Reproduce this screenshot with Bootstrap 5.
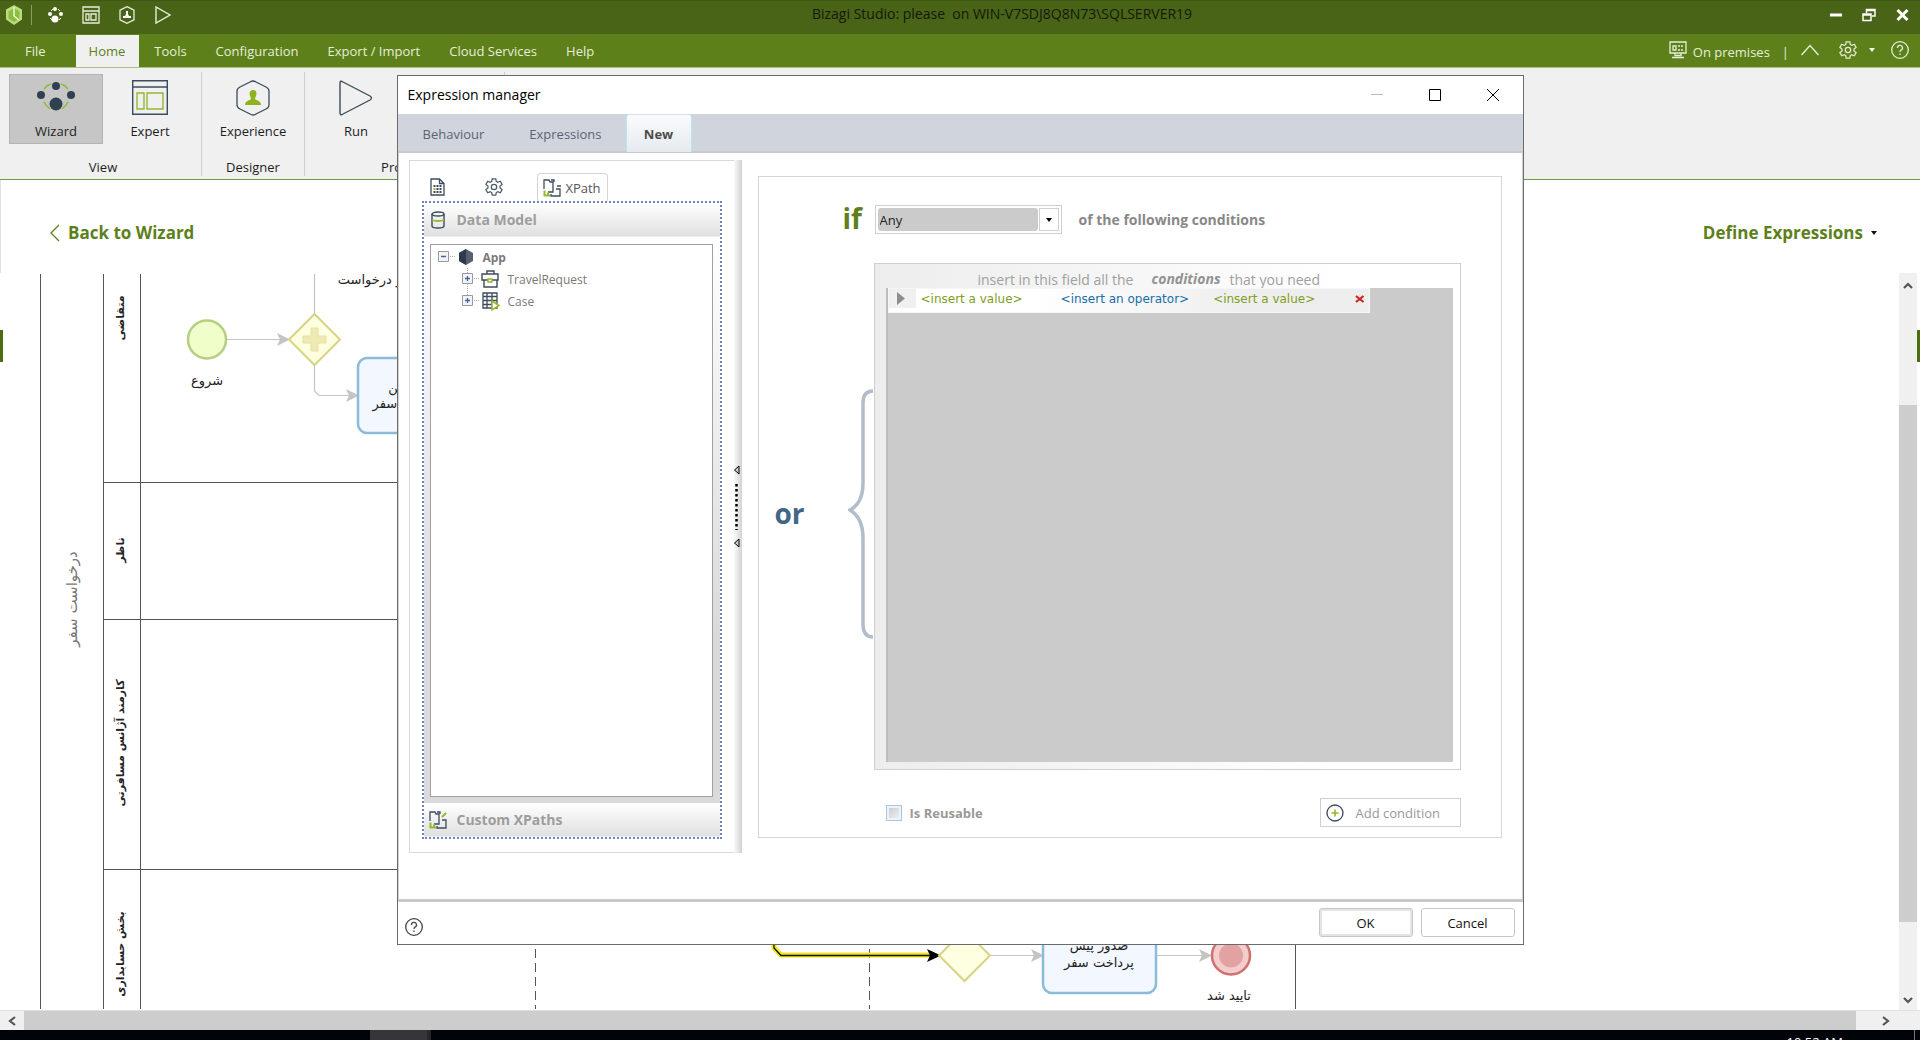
<!DOCTYPE html>
<html lang="en">
<head>
<meta charset="utf-8">
<meta name="viewport" content="width=device-width, initial-scale=1">
<title>Bizagi Studio</title>
<link href="https://cdn.jsdelivr.net/npm/bootstrap@5.3.0/dist/css/bootstrap.min.css" rel="stylesheet">
<style>
  :root { --green: #5d801b; }
  body { font-family: "Open Sans", "DejaVu Sans", sans-serif; font-size: 13px; line-height: 16px; color: #1e1e1e; background: #fff; }
  button { font: inherit; color: inherit; background: none; border: 0; padding: 0; }
  svg { display: block; flex: none; }
  a { text-decoration: none; }

  .titlebar { height: 34px; background: #496317; border-top: 1px solid #3f5714; color: #14190c; padding: 0 6px 6px 5px; }
  .titlebar .side { flex: 1 1 0; }
  .apptitle { font-size: 14px; white-space: pre; padding: 0 0 2px 90px; }
  .winbtns { gap: 20px; padding-right: 5px; }
  .title-sep { width: 1px; height: 20px; background: #8a9c68; }
  .menubar { height: 34px; background: var(--green); border-bottom: 1px solid #a9bf83; color: #e6eed6; gap: 1px; }
  .menubar a { color: #e6eed6; padding: 0 14px; height: 32px; display: flex; align-items: center; }
  .menubar a.current { background: #f0f0f0; color: var(--green); padding-left: 13px; }
  .menubar a.first { padding-left: 25px; padding-right: 29px; }
  .menutools { gap: 16px; padding-right: 11px; padding-bottom: 2px; }
  .menutools .divider { margin: 0 -4px; padding-top: 4px; }
  .menugear { gap: 12px; padding-left: 4px; }

  .ribbon { height: 112px; background: #f0f0f0; border-bottom: 1px solid #6f9a3a; padding-top: 4px; }
  .rgroup { height: 104px; border-right: 1px solid #cfcfcf; padding: 2px 4px 1px; }
  .rgroup.view { padding-left: 9px; }
  .rgroup.process { width: 200px; }
  .rbtn { width: 94px; height: 70px; border: 1px solid transparent; padding: 5px 0 4px; display: flex; flex-direction: column; align-items: center; justify-content: space-between; }
  .rbtn.pressed { background: #c6c6c6; border-color: #b4b4b4; }

  .workhead { height: 93px; padding: 13px 43px 0 49px; border-left: 1px solid #e0e0e0; }
  .workhead a, .workhead button { color: var(--green); font-size: 17px; font-weight: 700; gap: 8px; }
  .edge { width: 3px; background: linear-gradient(#4d6d14, #4d6d14) 0 57px / 100% 32px no-repeat; }
  .shrinkable { min-height: 0; }
  .vbar { width: 18px; background: #f0f0f0; }
  .vbar .above { flex: 112 0 0; } .vbar .thumb { flex: 517 0 0; } .vbar .below { flex: 68 0 0; }
  .hbar { height: 20px; background: #f0f0f0; border-top: 1px solid #e0e0e0; }
  .thumb { background: #cdcdcd; }
  .vbar .btnbox { height: 20px; }
  .hbar .first { width: 24px; }
  .hbar .last { width: 64px; padding-left: 26px; }
  .taskbar { height: 10px; background: #000308; color: #fff; overflow: hidden; }
  .taskitem { width: 61px; height: 10px; margin-left: 370px; background: #36363a; border-right: 4px solid #28282b; }
  .clock { padding-top: 4px; }
  .showdesk { width: 6px; height: 10px; margin-left: 71px; border-left: 1px solid #777; }

  .overlay { position: absolute; left: 0; right: 0; top: 75px; display: flex; justify-content: center; }
  .dlg { width: 1127px; border: 1px solid #6b6b6b; background: #fff; }
  .dlg-title { height: 38px; padding: 0 24px 0 10px; font-size: 14px; color: #000; }
  .dlg-title .wbtns { gap: 46px; }
  .dlg-tabs { height: 39px; background: #cfd4dd; border-bottom: 2px solid #c8cacd; }
  .dlg-tabs button { height: 38px; color: #5c6470; padding: 1px 24px 0 25px; }
  .dlg-tabs button + button { padding-left: 21px; }
  .dlg-tabs button.current { background: linear-gradient(#fafbfc, #e6eaef); border: 1px solid #b5e6f2; border-top-color: #d8dde4; border-bottom: 0; border-radius: 3px 3px 0 0; width: 66px; padding: 0; font-weight: 700; color: #4c4c4c; }
  .dlg-body { padding: 7px 20px 46px 10px; border: 1px solid #d2d2d2; border-top: 0; border-bottom: 3px solid #c9c9c9; }
  .leftpane { width: 325px; border: 1px solid #d9d9d9; border-right: 0; padding: 12px 12px 13px; height: 693px; }
  .splitter { width: 8px; background: linear-gradient(90deg, #fafafa, #e4e4e4 55%, #d2d2d2); }
  .tooltabs { height: 28px; padding-left: 8px; }
  .tooltabs .gear { margin: 0 34px 0 40px; }
  .xtab { width: 71px; height: 28px; border: 1px solid #d4d4d4; border-bottom: 0; border-radius: 4px 4px 0 0; gap: 4px; color: #555; }
  .accordionbox { border: 2px dotted #6d84bd; flex: 1 1 auto; min-height: 0; }
  .acchead { height: 34px; padding-left: 7px; color: #9d9d9d; font-weight: 700; font-size: 14px; background: linear-gradient(#fff, #e0e0e0); border-bottom: 1px solid #eee; }
  .acchead .iconcell { width: 26px; }
  .acchead.lower { padding-left: 5px; } .acchead.lower .iconcell { width: 28px; }
  .accbody { padding: 7px 7px 6px 6px; background: linear-gradient(#fff, #dadada 70%); }
  .treebox { background: #fff; border: 1px solid #9ea0a8; padding: 1px 0 0 7px; color: #7a7a7a; font-size: 12px; }
  .treerow { height: 22px; }
  .treerow span { padding-top: 1px; }
  .rightpane { margin: 16px 0 15px 16px; border: 1px solid #d6d6d6; flex: 1 1 0; padding: 0 40px 10px 0; }
  .leadword { font-weight: 700; font-size: 28px; }
  .ifword { color: var(--green); line-height: 27px; width: 32px; }
  .orword { color: #436687; padding: 0 0 7px 16px; line-height: 32px; }
  .brace { margin-bottom: 5px; }
  .combo { width: 187px; height: 29px; border: 1px solid #cfcfcf; padding: 2px; }
  .combo select { appearance: none; border: 0; border-radius: 3px; background: #cbcbcb; color: #222; padding: 0 2px; width: 160px; height: 23px; font: inherit; }
  .combo .arrowbox { width: 20px; height: 23px; border: 1px solid #d0d0d0; }
  .followtext { color: #888; font-size: 14px; font-weight: 700; line-height: 29px; margin-left: 17px; }
  .ifrow { height: 86px; padding: 28px 0 0 84px; }
  .condbox { border: 1px solid #cfcfcf; background: linear-gradient(90deg, #ededed, #f7f7f7 45%, #fff 80%); padding: 6px 7px 7px 11px; height: 507px; width: 587px; color: #a0a0a0; font-size: 14px; }
  .condhint { line-height: 20px; height: 18px; padding-left: 92px; }
  .condhint b { margin: 0 9px 0 18px; color: #929292; line-height: 18px; }
  .condfield { background: #cbcbcb; border-left: 2px solid #bdbdbd; }
  .condrow { width: 482px; height: 25px; background: linear-gradient(90deg, #fff 30%, #eee 75%); border: 1px solid #f6f6f6; padding-bottom: 4px; font: 12px/16px "DejaVu Sans", sans-serif; }
  .condrow .handle { width: 27px; height: 19px; background: #f0f0f0; padding-left: 8px; margin-right: 5px; }
  .gtext { color: #7d9f21; } .btext { color: #1a6ea9; margin: 0 24px 0 38px; }
  .optrow { padding-left: 127px; }
  .optrow label { color: #999; font-weight: 700; }
  .reuse { appearance: none; width: 16px; height: 16px; margin: 0; border: 1px solid #a9c6e2; background: linear-gradient(135deg, #c3c6ca, #f6f6f6); box-shadow: inset 0 0 0 2px #edf3f9; }
  .addbtn { width: 141px; height: 29px; border: 1px solid #cfcfcf; color: #999; padding-left: 5px; gap: 12px; }
  .dlg-foot { height: 42px; padding: 0 8px 1px 7px; }
  .dlg-foot .push { width: 94px; height: 29px; border: 1px solid #c6c6c6; border-radius: 3px; background: #fff; color: #111; }
  .dlg-foot .push.main { box-shadow: inset 0 0 0 2px #e4e4e4; }
</style>
</head>
<body class="vh-100 overflow-hidden d-flex flex-column position-relative">

<header>
  <div class="titlebar d-flex align-items-center">
    <div class="side d-flex align-items-center">
      <svg width="18" height="20" viewBox="0 0 18 20"><path d="M9 0l8 4.500v10L9 20l-8-5.500v-10z" fill="#b9dc7e"/><path d="M9 3l5.500 3.500v7L9 17l-5.500-3.500v-7z" fill="#8cbd3f"/><path d="M9 2v9l5 4" fill="none" stroke="#eef8dc" stroke-width="1.500"/></svg>
      <span class="title-sep ms-2"></span>
      <svg class="ms-3" width="18" height="18" viewBox="0 0 18 18" fill="#fff"><circle cx="7" cy="3" r="2"/><circle cx="2" cy="8" r="2"/><circle cx="13" cy="8" r="2"/><circle cx="7" cy="13" r="3.500"/><path d="M3 5l2-2M12 5l-2-2M2 12l2 2M13 12l-2 2" stroke="#fff"/></svg>
      <svg class="ms-3" width="18" height="18" viewBox="0 0 18 18" fill="none" stroke="#e8eedc" stroke-width="1.300"><path d="M1 1h16v16H1zM1 5h16M4 8h3v6H4zM9 8h5v6H9z"/></svg>
      <svg class="ms-3" width="22" height="18" viewBox="0 0 22 18" fill="none" stroke="#e8eedc" stroke-width="1.300"><path d="M11 .7l7 3.500v9.600l-7 3.500-7-3.500V4.200z"/><path d="M10 5h2v3l1 2h2v2H7v-2h2l1-2z" fill="#fff" stroke="none"/></svg>
      <svg class="ms-3" width="18" height="18" viewBox="0 0 18 18" fill="none" stroke="#e8eedc" stroke-width="1.400"><path d="M2 1v16l14-8z"/></svg>
    </div>
    <div class="apptitle">Bizagi Studio: please  on WIN-V7SDJ8Q8N73\SQLSERVER19</div>
    <div class="side winbtns d-flex align-items-center justify-content-end">
      <button aria-label="Minimize"><svg width="12" height="14" viewBox="0 0 12 14"><path d="M0 7h12" stroke="#fff" stroke-width="3"/></svg></button>
      <button aria-label="Restore"><svg width="14" height="14" viewBox="0 0 14 14" fill="none" stroke="#fff" stroke-width="1.500"><path d="M1 6h8v6.500H1zM1 7h8M4.500 5V1.500H13V8h-3M4.500 2.500H13"/></svg></button>
      <button aria-label="Close"><svg width="13" height="14" viewBox="0 0 13 14"><path d="M1.500 2l10 10M11.500 2l-10 10" stroke="#fff" stroke-width="3"/></svg></button>
    </div>
  </div>

  <nav class="menubar d-flex align-items-end">
    <a class="first" href="#">File</a><a class="current" href="#">Home</a><a href="#">Tools</a><a href="#">Configuration</a><a href="#">Export / Import</a><a href="#">Cloud Services</a><a href="#">Help</a>
    <div class="menutools ms-auto d-flex align-items-center h-100">
      <span class="d-flex align-items-center gap-1"><svg width="20" height="18" viewBox="0 0 20 18" fill="none" stroke="#e6eed6" stroke-width="1.300"><path d="M1 1h16v11H1zM3 16.500h12M6 12v2.500h6V12M4 5h3v4H4zM9 5h2m1 0h2M9 9h2m1 0h2"/></svg><span class="pt-1">On premises</span></span><span class="divider">|</span>
      <button aria-label="Collapse ribbon"><svg width="18" height="12" viewBox="0 0 18 12" fill="none" stroke="#e6eed6" stroke-width="1.400"><path d="M.5 11L9 1.500 17.500 11"/></svg></button>
      <button class="menugear d-flex align-items-center" aria-label="Options"><svg width="18" height="18" viewBox="0 0 20 20" fill="none" stroke="#e6eed6" stroke-width="1.400"><path d="M8 1h4l.5 2.800 1.700 1L17 3.600l2 3.500-2.300 1.900v2l2.300 1.900-2 3.500-2.800-1.200-1.700 1L12 19H8l-.5-2.800-1.700-1L3 16.400l-2-3.500L3.300 11V9L1 7.100l2-3.500 2.800 1.200 1.700-1z"/><circle cx="10" cy="10" r="3"/></svg><svg width="6" height="4" viewBox="0 0 6 4"><path d="M0 0h6L3 4z" fill="#fff"/></svg></button>
      <button aria-label="Help"><svg width="18" height="18" viewBox="0 0 18 18" fill="none" stroke="#e6eed6" stroke-width="1.300"><circle cx="9" cy="9" r="8.300"/><path d="M6.500 7a2.500 2.500 0 1 1 3.500 2.200c-.8.400-1 .8-1 1.800M9 12.500V14"/></svg></button>
    </div>
  </nav>

  <div class="ribbon d-flex">
    <div class="rgroup view d-flex flex-column justify-content-between">
      <div class="d-flex">
        <button class="rbtn pressed"><svg width="40" height="34" viewBox="0 0 40 34"><path d="M8 9q3-4 7-5M25 4q4 1 7 5M8 22q2 4 6 7M32 22q-2 4-6 7" fill="none" stroke="#94b82e" stroke-width="1.500"/><g fill="#2f4050"><circle cx="20" cy="6" r="4"/><circle cx="5" cy="15" r="4"/><circle cx="35" cy="15" r="4"/><circle cx="20" cy="24" r="6.500"/></g></svg>Wizard</button>
        <button class="rbtn"><svg width="36" height="35" viewBox="0 0 36 35" fill="none"><path d="M.7.7h34.600v33.600H.7zM.7 7h34.600" stroke="#3c4c5c" stroke-width="1.400"/><path d="M5 13h7v16H5zM15 13h16v16H15z" stroke="#94b82e" stroke-width="1.400"/></svg>Expert</button>
      </div>
      <div class="text-center">View</div>
    </div>
    <div class="rgroup d-flex flex-column justify-content-between align-items-center">
      <button class="rbtn"><svg width="34" height="36" viewBox="0 0 34 36"><path d="M17 1q1.500 0 3 1l10 5q3 1.500 3 4v14q0 2.500-3 4l-10 5q-3 2-6 0L4 29q-3-1.500-3-4V11q0-2.500 3-4l10-5q1.500-1 3-1z" fill="none" stroke="#3c4c5c" stroke-width="1.300"/><path d="M17 10c2.500 0 3.600 2 3.500 4 0 2-1.500 3-1.500 5 1 1.500 6 1.500 6 6H9c0-4.500 5-4.500 6-6 0-2-1.500-3-1.500-5 0-2 1-4 3.500-4z" fill="#8fb31f"/></svg>Experience</button>
      <div>Designer</div>
    </div>
    <div class="rgroup process d-flex flex-column justify-content-between">
      <button class="rbtn"><svg width="34" height="36" viewBox="0 0 34 36"><path d="M1 3q0-3 3-1l27 14q3 2 0 4L4 34q-3 2-3-1z" fill="none" stroke="#3c4c5c" stroke-width="1.400"/></svg>Run</button>
      <div class="text-center">Process</div>
    </div>
  </div>
</header>

<main class="flex-grow-1 d-flex flex-column shrinkable">
  <div class="workhead d-flex align-items-center justify-content-between">
    <a href="#" class="d-flex align-items-center"><svg width="10" height="18" viewBox="0 0 10 18"><path d="M9 1L1 9l8 8" fill="none" stroke="#5d801b" stroke-width="1.300"/></svg>Back to Wizard</a>
    <button class="d-flex align-items-center">Define Expressions<svg width="6" height="4" viewBox="0 0 6 4"><path d="M0 0h6L3 4z" fill="#111"/></svg></button>
  </div>
  <div class="d-flex flex-grow-1 shrinkable">
    <div class="edge"></div>
    <div class="flex-grow-1 overflow-hidden">
      <svg width="100%" height="736" font-family="'DejaVu Sans', sans-serif" font-size="13" fill="#222" text-anchor="middle">
        <g transform="translate(-3 -273)">
          <g stroke="#555" stroke-width="1" fill="none" shape-rendering="crispEdges">
            <path d="M40.500 274V1009M103.500 274V1009M140.500 274V1009M1295.500 274V1009M103 482.500H1296M103 619.500H1296M103 869.500H1296"/>
            <path d="M535.500 949V1009M869.500 949V1009" stroke-dasharray="9 5"/>
          </g>
          <text transform="translate(77 599) rotate(-90)" font-size="15" fill="#777">درخواست سفر</text>
          <g font-weight="700" font-size="11">
            <text transform="translate(124 318) rotate(-90)">متقاضی</text>
            <text transform="translate(124 550) rotate(-90)">ناظر</text>
            <text transform="translate(124 743) rotate(-90)">کارمند آژانس مسافرتی</text>
            <text transform="translate(124 954) rotate(-90)">بخش حسابداری</text>
          </g>
          <g fill="none" stroke="#c4c4c4" stroke-width="1.200">
            <path d="M226 339.500H280M314.500 274V313M314.500 365V391L319 395.500H350M990 955.500H1035M1157 955.500H1203"/>
          </g>
          <g fill="#c4c4c4"><path d="M277 333l13 6.500-13 6.500 3-6.500zM346 389l13 6.500-13 6.500 3-6.500zM1031 949l13 6.500-13 6.500 3-6.500zM1199 949l13 6.500-13 6.500 3-6.500z"/></g>
          <path d="M774 940V948L781 955H930" fill="none" stroke="#f0e618" stroke-width="5"/>
          <path d="M774 940V948L781 955.500H930" fill="none" stroke="#111" stroke-width="1.300"/>
          <path d="M927 949l14 6.500-14 6.500 3-6.500z" fill="#000"/>
          <circle cx="207" cy="339.500" r="19" fill="#f0fecb" stroke="#b5d082" stroke-width="2.500"/>
          <g fill="#feffe0" stroke="#d6d385" stroke-width="2"><path d="M314.500 314l25.500 25.500-25.500 25.500L289 339.500zM964.500 930l25.500 25.500-25.500 25.500L939 955.500z"/></g>
          <path d="M311 328h7v8h8v7h-8v8h-7v-8h-8v-7h8z" fill="#efe9b4" stroke="#e6dfa6" stroke-width="1"/>
          <g fill="#f3f7ff" stroke="#8abbd8" stroke-width="2.500"><rect x="358" y="358" width="113" height="75" rx="9"/><rect x="1043" y="918" width="113" height="75" rx="9"/></g>
          <circle cx="1231" cy="955.500" r="19" fill="#f3cccc" stroke="#cf7171" stroke-width="2.500"/><circle cx="1231" cy="955.500" r="12" fill="#e2a2a2"/>
          <text x="207" y="385">شروع</text>
          <text x="370" y="284">و درخواست</text>
          <text x="402" y="392">تعیین</text>
          <text x="414" y="408">درخواست سفر</text>
          <text x="1099" y="950">صدور پیش</text>
          <text x="1099" y="967">پرداخت سفر</text>
          <text x="1229" y="1000">تایید شد</text>
        </g>
      </svg>
    </div>
    <div class="vbar d-flex flex-column align-items-center">
      <div class="btnbox d-flex align-items-center pt-1"><svg width="10" height="7" viewBox="0 0 10 7"><path d="M1 6l4-4 4 4" fill="none" stroke="#555" stroke-width="2.200"/></svg></div>
      <div class="above"></div>
      <div class="thumb w-100"></div>
      <div class="below"></div>
      <div class="btnbox d-flex align-items-center"><svg width="10" height="7" viewBox="0 0 10 7"><path d="M1 1l4 4 4-4" fill="none" stroke="#555" stroke-width="2.200"/></svg></div>
    </div>
    <div class="edge"></div>
  </div>
  <div class="hbar d-flex align-items-stretch">
    <div class="first d-flex align-items-center justify-content-center"><svg width="8" height="10" viewBox="0 0 8 10"><path d="M7 1L2 5l5 4" fill="none" stroke="#555" stroke-width="2.200"/></svg></div>
    <div class="thumb flex-grow-1"></div>
    <div class="last d-flex align-items-center"><svg width="8" height="10" viewBox="0 0 8 10"><path d="M1 1l5 4-5 4" fill="none" stroke="#555" stroke-width="2.200"/></svg></div>
  </div>
</main>
<footer class="taskbar d-flex align-items-start"><div class="taskitem"></div><div class="clock ms-auto">10:52 AM</div><div class="showdesk"></div></footer>

<div class="overlay">
<section class="dlg" role="dialog" aria-label="Expression manager">
  <div class="dlg-title d-flex align-items-center justify-content-between">
    <span>Expression manager</span>
    <div class="wbtns d-flex align-items-center">
      <button aria-label="Minimize"><svg width="12" height="12"><path d="M0 5.500h12" stroke="#bbb"/></svg></button>
      <button aria-label="Maximize"><svg width="12" height="12"><path d="M.5.5h11v11H.5z" fill="none" stroke="#000"/></svg></button>
      <button aria-label="Close"><svg width="12" height="12"><path d="M0 0l12 12M12 0L0 12" stroke="#000"/></svg></button>
    </div>
  </div>
  <div class="dlg-tabs d-flex">
    <button>Behaviour</button><button>Expressions</button><button class="current">New</button>
  </div>
  <div class="dlg-body d-flex">
    <div class="leftpane d-flex flex-column">
      <div class="tooltabs d-flex align-items-center">
        <button aria-label="Rules"><svg width="15" height="18" viewBox="0 0 15 18" fill="none" stroke="#3c4c5c" stroke-width="1.300"><path d="M1 1h8.500L14 5.500V17H1zM9.500 1v4.500H14"/><path d="M3.500 8h2m1 0h2m1 0h2M3.500 14h2m1 0h2m1 0h2M6.500 11h2m1 0h2" stroke-width="2"/><path d="M3.500 11h2" stroke="#94b82e" stroke-width="2"/></svg></button>
        <button aria-label="Functions" class="gear"><svg width="18" height="18" viewBox="0 0 20 20" fill="none" stroke="#4c5a68" stroke-width="1.400"><path d="M8 1h4l.5 2.800 1.700 1L17 3.600l2 3.500-2.300 1.900v2l2.300 1.900-2 3.500-2.800-1.200-1.700 1L12 19H8l-.5-2.800-1.700-1L3 16.400l-2-3.500L3.300 11V9L1 7.100l2-3.500 2.800 1.200 1.700-1z"/><circle cx="10" cy="10" r="3"/></svg></button>
        <button class="xtab d-flex align-items-center justify-content-center"><svg width="18" height="18" viewBox="0 0 18 18" fill="none" stroke="#3c4c5c" stroke-width="1.300"><path d="M1 10V1h5l1 2h3v10H5M8 1h3v2M14 7h4M13 10h4v7H8v-2"/><path d="M1.500 11.500v5H7M4 14.500h2" stroke="#94b82e" stroke-width="2"/></svg>XPath</button>
      </div>
      <div class="accordionbox d-flex flex-column">
        <div class="acchead d-flex align-items-center"><span class="iconcell"><svg width="14" height="18" viewBox="0 0 14 18" fill="none" stroke="#3c4c5c" stroke-width="1.400"><path d="M1 3v12q0 2 6 2t6-2V3"/><ellipse cx="7" cy="3" rx="6" ry="2"/><path d="M1 9q6 2 12 0" stroke="#94b82e" stroke-width="1.800"/></svg></span>Data Model</div>
        <div class="accbody flex-grow-1 d-flex">
          <div class="treebox w-100">
            <div class="treerow d-flex align-items-center fw-bold"><svg width="37" height="22" viewBox="0 0 37 22"><path d="M.5 5.500h10v10H.5z" fill="#f4f4f4" stroke="#999"/><path d="M3 10.500h5" stroke="#4463a8" stroke-width="1.500"/><path d="M12 10.500h5" stroke="#aaa" stroke-dasharray="1 1"/><path d="M28 3l7 4v8l-7 4-7-4V7z" fill="#56606e"/><path d="M21 7l7-4v16l-7-4z" fill="#2d3b4c"/></svg><span class="ms-2">App</span></div>
            <div class="treerow d-flex align-items-center ms-4"><svg width="38" height="22" viewBox="0 0 38 22"><path d="M5.500 0v5M5.500 16v6" stroke="#aaa" stroke-dasharray="1 1"/><path d="M.5 5.500h10v10H.5z" fill="#f4f4f4" stroke="#999"/><path d="M3 10.500h5M5.500 8v5" stroke="#4463a8" stroke-width="1.300"/><path d="M12 10.500h6" stroke="#aaa" stroke-dasharray="1 1"/><g fill="none" stroke="#3c4c5c" stroke-width="1.400"><path d="M20 6h16v6H20zM22 12v7h13v-7M25 6V3h7v3"/></g><path d="M26 11h4v3h-4z" fill="#fff" stroke="#94b82e" stroke-width="1.400"/></svg><span class="ms-1 ps-1">TravelRequest</span></div>
            <div class="treerow d-flex align-items-center ms-4"><svg width="38" height="22" viewBox="0 0 38 22"><path d="M5.500 0v5" stroke="#aaa" stroke-dasharray="1 1"/><path d="M.5 5.500h10v10H.5z" fill="#f4f4f4" stroke="#999"/><path d="M3 10.500h5M5.500 8v5" stroke="#4463a8" stroke-width="1.300"/><path d="M12 10.500h6" stroke="#aaa" stroke-dasharray="1 1"/><path d="M21 3h14v15H21zM21 6.500h14M21 10.500h14M21 14.500h14M25 3v15M30 3v15" fill="none" stroke="#3c4c5c" stroke-width="1.300"/><path d="M30 11l7 4.500-7 4.500z" fill="#fff" stroke="#94b82e" stroke-width="1.500"/></svg><span class="ms-1 ps-1">Case</span></div>
          </div>
        </div>
        <div class="acchead lower d-flex align-items-center"><span class="iconcell"><svg width="18" height="18" viewBox="0 0 18 18" fill="none" stroke="#3c4c5c" stroke-width="1.300"><path d="M1 10V1h5l1 2h3v10H5M8 1h3v2M13 9h4v8H8v-2"/><path d="M1.500 11.500v5H7M4 14.500h2M13 6l4-4" stroke="#94b82e" stroke-width="2"/></svg></span>Custom XPaths</div>
      </div>
    </div>
    <div class="splitter d-flex flex-column justify-content-center">
      <svg width="8" height="84" viewBox="0 0 8 84"><path d="M5 1v8L.5 5zM5 74v8L.5 78z" fill="#ccc" stroke="#000"/><path d="M2.500 19v46" stroke="#000" stroke-width="2.500" stroke-dasharray="2.500 2.500"/></svg>
    </div>
    <div class="rightpane d-flex flex-column">
      <div class="ifrow d-flex">
        <span class="leadword ifword">if</span>
        <div class="combo d-flex justify-content-between">
          <select aria-label="Condition mode"><option>Any</option></select>
          <span class="arrowbox d-flex align-items-center justify-content-center"><svg width="6" height="4" viewBox="0 0 6 4"><path d="M0 0h6L3 4z"/></svg></span>
        </div>
        <span class="followtext">of the following conditions</span>
      </div>
      <div class="d-flex align-items-center">
        <span class="leadword orword flex-grow-1">or</span>
        <svg class="brace" width="26" height="250" viewBox="0 0 26 250"><path d="M25 2q-10 0-10 12v80q0 20-13 27 13 8 13 28v86q0 13 10 13" fill="none" stroke="#b1bdcb" stroke-width="3.500"/></svg>
        <div class="condbox d-flex flex-column">
          <div class="condhint d-flex"><span>insert in this field all the</span><b class="fst-italic">conditions</b><span>that you need</span></div>
          <div class="condfield flex-grow-1">
            <div class="condrow d-flex align-items-center">
              <span class="handle d-flex align-items-center"><svg width="8" height="13" viewBox="0 0 8 13"><path d="M0 0l8 6.500L0 13z" fill="#8e8e8e"/></svg></span>
              <span class="gtext">&lt;insert a value&gt;</span><span class="btext">&lt;insert an operator&gt;</span><span class="gtext">&lt;insert a value&gt;</span>
              <button class="ms-auto me-1" aria-label="Delete condition"><svg width="10" height="8" viewBox="0 0 10 8"><path d="M1 1l7.500 6M8.500 1L1 7" stroke="#d0211c" stroke-width="2.200"/></svg></button>
            </div>
          </div>
        </div>
      </div>
      <div class="d-flex align-items-center justify-content-between mt-auto optrow">
        <div class="d-flex align-items-center gap-2"><input class="reuse" type="checkbox" id="reuse"><label for="reuse">Is Reusable</label></div>
        <button class="addbtn d-flex align-items-center"><svg width="18" height="18" viewBox="0 0 18 18" fill="none"><circle cx="9" cy="9" r="8" stroke="#3c4c5c" stroke-width="1.300"/><path d="M5.500 9h7M9 5.500v7" stroke="#94b82e" stroke-width="1.600"/></svg>Add condition</button>
      </div>
    </div>
  </div>
  <div class="dlg-foot d-flex align-items-center">
    <button aria-label="Help" class="me-auto pt-2"><svg width="18" height="18" viewBox="0 0 18 18" fill="none" stroke="#444" stroke-width="1.300"><circle cx="9" cy="9" r="8.300"/><path d="M6.500 7a2.500 2.500 0 1 1 3.500 2.200c-.8.400-1 .8-1 1.800M9 12.500V14"/></svg></button>
    <button class="push main">OK</button><button class="push ms-2">Cancel</button>
  </div>
</section>
</div>
<script src="https://cdn.jsdelivr.net/npm/bootstrap@5.3.0/dist/js/bootstrap.bundle.min.js"></script>
</body>
</html>
